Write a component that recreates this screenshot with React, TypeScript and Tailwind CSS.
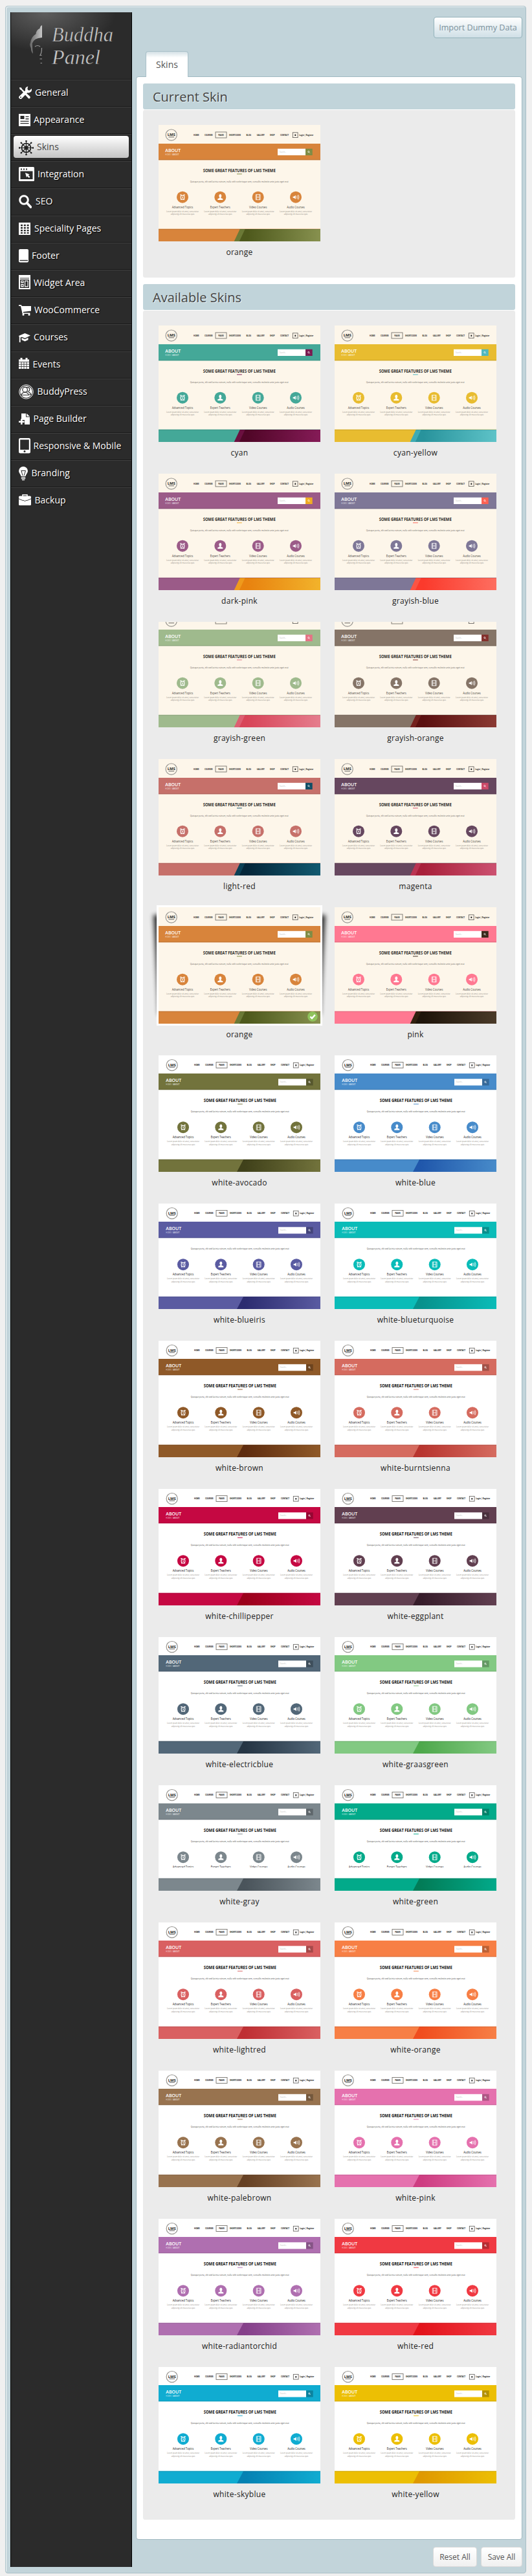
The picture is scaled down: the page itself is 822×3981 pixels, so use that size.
import { createContext, useContext } from 'react';
import type { ReactNode } from 'react';

type Skin = {
  name: string;
  main: string;
  accent: string;
  edge?: string;
  dark: string;
  light: string;
  white?: boolean;
  cut?: number;
  selected?: boolean;
};

const THUMB_H = 180;
const CUT_H = 17;

const w = (name: string, main: string, dark: string, cut?: number): Skin => ({
  name: 'white-' + name,
  main,
  accent: main,
  dark,
  light: main,
  white: true,
  cut,
});

const orange: Skin = { name: 'orange', main: '#d8843b', accent: '#7f8c45', edge: '#6b7936', dark: '#4e591c', light: '#87914f' };

const skins: Skin[] = [
  { name: 'cyan', main: '#44a898', accent: '#7a1a50', edge: '#6b1040', dark: '#500627', light: '#851b57' },
  { name: 'cyan-yellow', main: '#e8bc30', accent: '#4fb7bf', edge: '#3eabb3', dark: '#28939c', light: '#5ec3c8' },
  { name: 'dark-pink', main: '#9b5b88', accent: '#f0ac24', edge: '#ef9a1c', dark: '#e8820f', light: '#f2b32b' },
  { name: 'grayish-blue', main: '#7e7797', accent: '#fc6253', edge: '#fa5444', dark: '#fb3a2c', light: '#fd6e60' },
  { name: 'grayish-green', main: '#9fba8d', accent: '#e57385', edge: '#de5f72', dark: '#d84458', light: '#e57d8d', cut: 0 },
  { name: 'grayish-orange', main: '#857467', accent: '#84302c', edge: '#74211e', dark: '#5a1010', light: '#8b3a33', cut: 0 },
  { name: 'light-red', main: '#c6706a', accent: '#0f4e66', edge: '#0b4056', dark: '#04263a', light: '#125a70' },
  { name: 'magenta', main: '#66475f', accent: '#cb4a68', edge: '#bb3452', dark: '#a8203a', light: '#cc5170' },
  { ...orange, selected: true },
  { name: 'pink', main: '#ff7891', accent: '#3b2a1c', edge: '#30200f', dark: '#1e140a', light: '#4a3a28' },
  w('avocado', '#72733c', '#40411a'),
  w('blue', '#478bca', '#2057ab'),
  w('blueiris', '#5a5ba1', '#2c2c70', 61),
  w('blueturquoise', '#0abcb8', '#07918c', 61),
  w('brown', '#8f5928', '#5e2c0f'),
  w('burntsienna', '#d56b5f', '#b8352f'),
  w('chillipepper', '#c50842', '#9b001a'),
  w('eggplant', '#613f50', '#361c2a'),
  w('electricblue', '#526778', '#253544'),
  w('graasgreen', '#82c982', '#4ea84b'),
  w('gray', '#7c878d', '#4a545b', 127),
  w('green', '#02aa8a', '#027c57', 127),
  w('lightred', '#d96061', '#bf2f33'),
  w('orange', '#f77f45', '#f04d1e'),
  w('palebrown', '#98734f', '#664124'),
  w('pink', '#e571ae', '#ce3c81'),
  w('radiantorchid', '#af6fb0', '#85408a'),
  w('red', '#f03942', '#e3131b'),
  w('skyblue', '#10acd1', '#0582b3'),
  w('yellow', '#ecbf04', '#df9900'),
];

const nav: [string, number, number][] = [
  ['HOME', 58.3, 8.4],
  ['COURSES', 77.3, 12.6],
  ['PAGES', 96.5, 8.6],
  ['SHORTCODES', 118, 18],
  ['BLOG', 139.3, 7.6],
  ['GALLERY', 157.7, 12],
  ['SHOP', 175.7, 7.6],
  ['CONTACT', 194.5, 13],
];

const features: [string, number, number][] = [
  ['Advanced Topics', 37, 32.6],
  ['Expert Teachers', 95.3, 31],
  ['Video Courses', 153.7, 27.4],
  ['Audio Courses', 212, 27.6],
];

// Vertical slice of the artwork that is visible; text outside it is skipped.
const Slice = createContext<[number, number]>([0, THUMB_H]);

function T({ x, y, len, size, fill, weight = 400, anchor = 'start', children }: {
  x: number; y: number; len: number; size: number; fill: string; weight?: number; anchor?: 'start' | 'middle'; children: ReactNode;
}) {
  const [from, to] = useContext(Slice);
  if (y - 1.5 < from || y - size * 0.7 > to) return null;
  return (
    <text
      x={anchor === 'middle' ? x - len / 2 : x}
      y={y}
      textLength={len}
      lengthAdjust="spacingAndGlyphs"
      fontSize={size}
      fontWeight={weight}
      fill={fill}
    >
      {children}
    </text>
  );
}

const glyphs: ReactNode[] = [
  <g fill="none" stroke="#fff" strokeWidth="1.1" key="clock">
    <rect x="-2.8" y="-2.6" width="5.6" height="6" rx="2" />
    <path d="M-3.8-3.6h2.4M1.4-3.6h2.4M-2.8 4.2l1-1M2.8 4.2l-1-1M0-1v2h1" />
  </g>,
  <g fill="#fff" key="user">
    <ellipse cx="0" cy="-2" rx="2" ry="2.6" />
    <path d="M-1 0h2v1.400l3 1.200v1.600h-8v-1.600l3-1.200z" />
  </g>,
  <g fill="none" stroke="#fff" strokeWidth="0.8" key="film">
    <path d="M-3.400-4v8M3.400-4v8M-2-4v8M2-4v8M-3.400-4h6.800M-2 0h4M-3.400 4h6.800" />
  </g>,
  <g key="audio">
    <path d="M-4.400-1h1.600l2.600-2v6l-2.600-2h-1.600z" fill="#fff" />
    <path d="M1.200-2q1.200 2 0 4M2.600-3q1.800 3 0 6M4-3.800q2.200 3.800 0 7.600" fill="none" stroke="#fff" strokeWidth="0.7" />
  </g>,
];

function ThumbArt({ skin, id }: { skin: Skin; id: string }) {
  const wht = !!skin.white;
  const top = wht ? 28 : 29;
  const d = wht ? 1 : 0;
  const ink = wht ? '#111' : '#2b2926';
  return (
    <g fontFamily='"Open Sans", sans-serif'>
      <defs>
        <linearGradient id={id} x1="0.1" x2="1">
          <stop offset="0" stopColor={skin.dark} />
          <stop offset="1" stopColor={skin.light} />
        </linearGradient>
      </defs>
      <rect width="250" height="180" fill={wht ? '#fff' : '#fdf6ea'} />
      <g transform={`translate(${d} ${-d * 0.5})`}>
        <circle cx="19.7" cy="15.6" r="8.6" fill="none" stroke="#999793" strokeWidth="1.2" />
        <T x={19.7} y={17.4} len={12} size={5.6} fill="#222" weight={700} anchor="middle">LMS</T>
        <path d="M15.5 18.800h8.600" stroke="#555" strokeWidth="0.9" />
        {nav.map(([t, x, len]) => (
          <T key={t} x={x} y={16.8} len={len} size={3} fill={ink} weight={700} anchor="middle">{t}</T>
        ))}
        <rect x="88" y="11" width="17" height="9" fill="none" stroke="#77736e" strokeWidth="0.9" />
        <rect x="207.3" y="11.8" width="7.8" height="7.8" fill="none" stroke="#5a5754" strokeWidth="0.8" />
        <rect x="210.4" y="14.6" width="1.8" height="2.4" fill="#222" />
        <T x={217.3} y={16.8} len={22} size={3} fill={ink} weight={700}>Login | Register</T>
      </g>
      <rect y={top} width="250" height={wht ? 25 : 25.2} fill={skin.main} />
      <rect y={top + 24.3} width="250" height="0.9" fill="#000" opacity="0.14" />
      <rect y={top + 25.2} width="250" height="0.8" fill={skin.main} opacity="0.35" />
      <g transform={`translate(${d} ${-d * 0.5})`}>
        <T x={10.3} y={41.7} len={24} size={6.6} fill="#fff" weight={600}>ABOUT</T>
        <T x={10.3} y={46.6} len={21} size={2.6} fill="#ffffffb0">HOME / <tspan fontWeight="700">ABOUT</tspan></T>
        <rect x="184" y="36.8" width="43" height="10.2" fill="#fff" />
        <T x={187} y={42.7} len={10} size={2.8} fill="#bbb">Search...</T>
        <rect x="227" y="36.8" width="10.7" height="10.2" fill={skin.accent} />
        {wht && <rect x="227" y="36.8" width="10.7" height="10.2" fill="#000" opacity="0.24" />}
        <circle cx="231.8" cy="41.5" r="1.1" fill="none" stroke="#fff" strokeWidth="0.7" />
        <path d="M232.6 42.300l1.200 1.200" stroke="#fff" strokeWidth="0.7" />
        <T x={68.7} y={72.6} len={112} size={6.4} fill={wht ? '#111' : '#2b2926'} weight={700}>SOME GREAT FEATURES OF LMS THEME</T>
        <rect x="121" y="75" width="7.8" height="1.6" fill={skin.accent} opacity="0.6" />
        <T x={48.7} y={88.6} len={152} size={3.5} fill={wht ? '#444' : '#66625c'}>
          Quisque porta, elit sed lacinia rutrum, nulla velit scelerisque sem, convallis molestie ante justo eget erat
        </T>
        {features.map(([t, x, len], i) => (
          <g key={t}>
            <circle cx={x} cy="111.7" r="9" fill={skin.main} />
            <g transform={`translate(${x} 111.7)`}>{glyphs[i]}</g>
            <T x={x} y={128.5} len={len} size={4.4} fill={wht ? '#222' : '#4a4743'} anchor="middle">{t}</T>
            <T x={x} y={134.6} len={50} size={2.9} fill="#8f8b84" anchor="middle">Lorem ipsum dolor sit amet, consectetur</T>
            <T x={x} y={139.4} len={36.5} size={2.9} fill="#8f8b84" anchor="middle">adipiscing elit maecenas quis</T>
          </g>
        ))}
      </g>
      <rect y="160" width="250" height="1" fill={skin.main} opacity="0.35" />
      <rect y="161" width="250" height="19" fill={skin.main} />
      {wht ? (
        <path d="M131 161h119v19h-129z" fill={`url(#${id})`} />
      ) : (
        <>
          <path d="M125.7 161h124.3v19h-133.3z" fill={skin.edge} />
          <path d="M133.7 161h116.3v19h-125.3z" fill={`url(#${id})`} />
        </>
      )}
      <rect y="161" width="250" height="0.9" fill="#000" opacity="0.12" />
    </g>
  );
}

function Thumb({ skin, id }: { skin: Skin; id: string }) {
  if (skin.cut === undefined) {
    return (
      <svg width="250" height={THUMB_H} viewBox={`0 0 250 ${THUMB_H}`} className="block">
        <ThumbArt skin={skin} id={id} />
      </svg>
    );
  }
  const restTop = skin.cut + CUT_H;
  const rest = THUMB_H - restTop;
  return (
    <div className="flex flex-col">
      {skin.cut > 0 && (
        <Slice.Provider value={[0, skin.cut]}>
          <svg width="250" height={skin.cut} viewBox={`0 0 250 ${skin.cut}`} className="block">
            <ThumbArt skin={skin} id={id + 'a'} />
          </svg>
        </Slice.Provider>
      )}
      <Slice.Provider value={[restTop, THUMB_H]}>
        <svg width="250" height={rest} viewBox={`0 ${restTop} 250 ${rest}`} className="block">
          <ThumbArt skin={skin} id={id + 'b'} />
        </svg>
      </Slice.Provider>
    </div>
  );
}

function SkinCard({ skin, id }: { skin: Skin; id: string }) {
  return (
    <li className="w-[250px]">
      <div className="relative">
        {skin.selected && (
          <>
            <svg className="absolute -top-5 -left-5" width="290" height="220" viewBox="-20 -20 290 220">
              <defs>
                <filter id="lift" x="-20%" y="-20%" width="140%" height="140%">
                  <feGaussianBlur stdDeviation="3.6" />
                </filter>
              </defs>
              <path d="M-8 12H258Q254 80 250 166H0Q-4 80-8 12z" fill="#000" opacity="0.8" filter="url(#lift)" />
            </svg>
            <div className="absolute -inset-[3px] bg-white" />
          </>
        )}
        <div className="relative">
          <Thumb skin={skin} id={id} />
        </div>
        {skin.selected && (
          <svg className="absolute right-1 bottom-[3px]" width="16" height="16" viewBox="0 0 16 16">
            <circle cx="8" cy="8" r="7.8" fill="#8fc25c" />
            <path d="M4.400 8.200l2.600 2.600 4.800-5.400" fill="none" stroke="#fff" strokeWidth="2.4" />
          </svg>
        )}
      </div>
      <p className="pt-2 text-center text-[12px] leading-[18px] tracking-[0.3px] text-[#222]">{skin.name}</p>
    </li>
  );
}

type Item = { label: string; w: number; off: number; gap: number; icon: ReactNode };

const items: Item[] = [
  {
    label: 'General', w: 20, off: 4, gap: 5,
    icon: (
      <>
        <path d="M1 2l3 .6 1 2 6.2 6 5.8 5.2a2 2 0 0 1 .4 2.8 2 2 0 0 1-3 0L9 12.4 3.8 6.2 1.6 5z" />
        <path d="M14.4.4a5 5 0 0 0-4.2 6.4L1 15.4a2.6 2.6 0 0 0 3.6 3.8l8.8-9A5 5 0 0 0 19.8 4l-3 2.8-2.8-.6-.6-2.6z" />
        <circle cx="3" cy="17.2" r="1" fill="#2b2b2b" />
      </>
    ),
  },
  {
    label: 'Appearance', w: 18, off: 5, gap: 5,
    icon: (
      <>
        <path d="M0 0h18v19H0z" />
        <path d="M2.5 3h6v5h-6zM10.500 3.700h5v1.400h-5zM10.500 7h5v1.400h-5zM2.500 10.700h13v1.300h-13zM2.500 14h13v1.300h-13z" fill="#2b2b2b" />
      </>
    ),
  },
  {
    label: 'Skins', w: 23, off: 4, gap: 5,
    icon: (
      <g fill="none" stroke="#1d1d1d">
        <circle cx="11.500" cy="11.500" r="7" strokeWidth="1.700" />
        <circle cx="11.500" cy="11.500" r="2.600" strokeWidth="1.200" />
        <path d="M11.500 0v23M0 11.500h23M3.600 3.600l15.800 15.800M19.400 3.600L3.600 19.400" strokeWidth="1.100" />
        <path d="M11.500 0v2M11.500 21v2M0 11.500h2M21 11.500h2M3 3l1.500 1.500M18.500 18.500L20 20M20 3l-1.500 1.500M4.500 18.500L3 20" strokeWidth="2.400" />
      </g>
    ),
  },
  {
    label: 'Integration', w: 24, off: 3, gap: 5,
    icon: (
      <>
        <rect width="24" height="22" rx="1.500" />
        <path d="M2.500 6.500h19v12.500h-19zM3 2.500h2v2H3zM7 2.500h2v2H7zM11 2.500h2v2h-2z" fill="#2b2b2b" />
        <path d="M10 9l6.800 2.400-2 1.200 2.600 2.800-1.600 1.600-2.600-2.800-1.200 2z" />
      </>
    ),
  },
  {
    label: 'SEO', w: 20, off: 4, gap: 6,
    icon: (
      <>
        <circle cx="8" cy="8" r="6.300" fill="none" stroke="#fff" strokeWidth="3" />
        <path d="M12.500 12.500l6 6.500" stroke="#fff" strokeWidth="3.600" strokeLinecap="round" />
      </>
    ),
  },
  {
    label: 'Speciality Pages', w: 18, off: 5, gap: 6,
    icon: (
      <>
        <path d="M0 0h18v19H0z" />
        <path d="M3 3h3v2.500H3zM7.800 3h3v2.500h-3zM12.600 3h3v2.500h-3zM3 7h3v2.500H3zM7.800 7h3v2.500h-3zM12.600 7h3v2.500h-3zM3 11h3v2.500H3zM7.800 11h3v2.500h-3zM12.600 11h3v2.500h-3zM3 15h3v2H3zM7.800 15h3v2h-3zM12.600 15h3v2h-3z" fill="#2b2b2b" />
      </>
    ),
  },
  {
    label: 'Footer', w: 15, off: 4, gap: 5,
    icon: (
      <>
        <rect width="15" height="20.500" rx="2" />
        <path d="M1.500 16.800h12.500v1.400H1.500z" fill="#2b2b2b" />
      </>
    ),
  },
  {
    label: 'Widget Area', w: 18, off: 2, gap: 5,
    icon: (
      <>
        <path d="M0 0h18v22H0z" />
        <path d="M2 4.500h14v1H2zM2 7h14v13H2z" fill="#2b2b2b" />
        <path d="M3.300 8.500h4.400v4H3.300zM3.300 14h4.400v4.500H3.300zM9 8.500h5.700v10H9z" />
        <path d="M4.400 9.800h2.200v1.200H4.400zM4.400 15.500h2.200v1.500H4.400zM10.200 9.700h3.300v7.600h-3.300z" fill="#2b2b2b" />
      </>
    ),
  },
  {
    label: 'WooCommerce', w: 19, off: 6, gap: 5,
    icon: (
      <>
        <path d="M0 .3h3.800l1 1.700H19v7.500L6.700 11l.5 1.500h10.300V14H5.700L3 2H0z" />
        <circle cx="7" cy="15.300" r="1.500" />
        <circle cx="16" cy="15.300" r="1.500" />
      </>
    ),
  },
  {
    label: 'Courses', w: 18, off: 8, gap: 5,
    icon: (
      <>
        <path d="M0 4l9.500-4L18 3.600 9.500 7.800 5 5.800 2.600 6.500V14H.8V6z" />
        <path d="M4.500 7l5 2.200 5-2.400v3.400l-5 2.200-5-2.200z" />
      </>
    ),
  },
  {
    label: 'Events', w: 16, off: 4, gap: 5.5,
    icon: (
      <>
        <path d="M0 2.500h16V17H0z" />
        <path d="M2.500 0h3v4h-3zM10.500 0h3v4h-3z" />
        <path d="M0 6.400h16M0 10h16M0 13.500h16M4 6.400V17M8 6.400V17M12 6.400V17" stroke="#2b2b2b" strokeWidth="0.8" />
      </>
    ),
  },
  {
    label: 'BuddyPress', w: 23, off: 3, gap: 5.5,
    icon: (
      <>
        <circle cx="11.500" cy="11.500" r="10.800" fill="none" stroke="#fff" strokeWidth="1" />
        <circle cx="11.500" cy="11.500" r="9.300" />
        <circle cx="13.600" cy="7.800" r="3.200" stroke="#2b2b2b" strokeWidth="1.200" />
        <circle cx="9.600" cy="8.200" r="3.800" stroke="#2b2b2b" strokeWidth="1.200" />
        <path d="M3.800 16.500q1-4 5.800-4t5.800 4z" stroke="#2b2b2b" strokeWidth="1.200" />
        <path d="M15 12q3 .6 3.800 4h-3" stroke="#2b2b2b" strokeWidth="1.200" />
      </>
    ),
  },
  {
    label: 'Page Builder', w: 17, off: 6, gap: 5.5,
    icon: (
      <>
        <path d="M4 0h7v5.500h6V17H9v-7H4z" />
        <path d="M12 0l5 4.600h-5z" />
        <path d="M3 8.500h2.600v3H8.500v2.600H5.600v3H3v-3H0v-2.600h3z" />
      </>
    ),
  },
  {
    label: 'Responsive & Mobile', w: 18, off: 2, gap: 4.5,
    icon: (
      <>
        <rect width="18" height="23.500" rx="2.500" />
        <path d="M2.200 2.500h13.600v15.500H2.200z" fill="#2b2b2b" />
        <circle cx="9" cy="20.500" r="1.500" fill="#2b2b2b" />
      </>
    ),
  },
  {
    label: 'Branding', w: 14, off: 4, gap: 5.5,
    icon: (
      <>
        <path d="M7 0a7 7 0 0 1 7 7c0 3-3 5-3.500 8h-7C3 12 0 10 0 7a7 7 0 0 1 7-7z" />
        <path d="M3.500 6.500h7L8 14M4 6.500L6 14" fill="none" stroke="#2b2b2b" strokeWidth="1" />
        <path d="M3.800 16h6.400v1.300H3.800zM3.800 18h6.400v1.300H3.800zM5 20h4v1.300H5z" />
      </>
    ),
  },
  {
    label: 'Backup', w: 19, off: 5, gap: 5.5,
    icon: (
      <>
        <path d="M6 3V.8h7V3" fill="none" stroke="#fff" strokeWidth="1.500" />
        <rect y="2.500" width="19" height="14.500" rx="1.500" />
        <path d="M0 6.800l7 3M19 6.800l-7 3M7 9q2.500 3 5 0" fill="none" stroke="#2b2b2b" strokeWidth="0.9" />
      </>
    ),
  },
];

function Sidebar() {
  return (
    <aside className="w-[188px] shrink-0 border-x border-black bg-[#2b2b2b]">
      <div className="h-[104px] border-b border-[#191919] bg-[radial-gradient(ellipse_110px_60px_at_28%_0%,#5e5e5e,#2b2b2b)]">
        <svg width="186" height="103" viewBox="17 19 186 103" className="block">
          <defs>
            <linearGradient id="silver" x1="0" x2="1">
              <stop offset="0" stopColor="#666" />
              <stop offset="1" stopColor="#c8c8c8" />
            </linearGradient>
          </defs>
          <path d="M65 39q-3 1-3.500 5-5.500 2-6 8.500Q48 57 47 66q-2 3 .8 8 .2 6 3 9-1-10-1-16 2-8 15.200-9z" fill="url(#silver)" />
          <path d="M54 72q4-3 8 0M64.500 74q0 8-2.600 11.500h2.600M61.500 91h3.500M62.500 97.500h2.500" fill="none" stroke="#999" strokeWidth="1.200" />
          <g fontFamily='"Liberation Serif", serif' fontStyle="italic" fontSize="32" fill="#cacaca" stroke="#2b2b2b" strokeWidth="0.5">
            <text x="80" y="64" textLength="95" lengthAdjust="spacingAndGlyphs">Buddha</text>
            <text x="80" y="99" textLength="75" lengthAdjust="spacingAndGlyphs">Panel</text>
          </g>
        </svg>
      </div>
      <ul>
        {items.map((it, i) => {
          const active = it.label === 'Skins';
          const last = i === items.length - 1;
          return (
            <li
              key={it.label}
              className={
                'flex h-[42px] border-t border-t-[#404040] px-1 ' +
                (last ? '' : 'border-b border-b-[#191919]')
              }
            >
              <div
                className={
                  'mt-[2px] flex h-[34px] w-full pl-2 ' +
                  (active ? 'rounded-[4px] bg-gradient-to-b from-white to-[#c4c4c4]' : '')
                }
              >
                <svg width={it.w} height="30" viewBox={`0 ${-it.off} ${it.w} 30`} fill="#fff" className="mt-[3px] shrink-0">
                  {it.icon}
                </svg>
                <span
                  className={
                    'text-[14px] leading-[34px] whitespace-nowrap ' +
                    (active ? 'text-[#444]' : 'text-white [text-shadow:1px_1px_1px_#000]')
                  }
                  style={{ marginLeft: it.gap }}
                >
                  {it.label}
                </span>
              </div>
            </li>
          );
        })}
      </ul>
    </aside>
  );
}

function PanelTitle({ children }: { children: ReactNode }) {
  return (
    <h2 className="h-10 rounded-[3px] bg-[#c1d4da] pl-[15px] text-[20px] leading-[41px] text-[#444] [text-shadow:1px_1px_0_#e8f0f2]">
      {children}
    </h2>
  );
}

export default function App() {
  return (
    <div className="h-[3981px] w-[822px] bg-[#f0f0f0] pt-[9px] pl-2 font-['Open_Sans',sans-serif]">
      <div className="flex h-[3968px] w-[805px] rounded-[4px] border border-[#a9c0c8] bg-[#c2d4da] pt-[9px] pb-[9px] pl-[7px] shadow-[inset_1px_1px_0_#f2f7f8]">
        <Sidebar />
        <div className="ml-[6px] flex w-[597px] flex-col">
          <div className="flex h-[60px] justify-end pt-[7px]">
            <button className="h-[33px] w-[137px] rounded-[4px] border border-[#94b3bb] bg-gradient-to-b from-white to-[#cfdfe6] text-[12.6px] leading-[30px] whitespace-nowrap text-[#7b919c]">
              Import Dummy Data
            </button>
          </div>
          <div className="flex h-[39px] pl-[15px]">
            <div className="relative z-10 h-10 w-[66px] rounded-t-[4px] border border-b-0 border-[#a9c0c8] bg-[linear-gradient(#d3e0e5,#fff_9px)] pt-[1px] text-center text-[14px] leading-[38px] text-[#555]">
              Skins
            </div>
          </div>
          <main className="h-[3807px] rounded-[4px] border border-[#a0b9c1] bg-white px-[10px] pt-[10px]">
            <PanelTitle>Current Skin</PanelTitle>
            <ul className="mt-px h-[259px] rounded-[3px] bg-[#ebebeb] pt-[23px] pl-6">
              <SkinCard skin={orange} id="current" />
            </ul>
            <div className="h-[10px]" />
            <PanelTitle>Available Skins</PanelTitle>
            <ul className="mt-px grid h-[3414px] grid-cols-[250px_250px] content-start gap-x-[22px] gap-y-[23px] rounded-[3px] bg-[#ebebeb] pt-[23px] pl-6">
              {skins.map((s, i) => (
                <SkinCard key={s.name + i} skin={s} id={`band${i}`} />
              ))}
            </ul>
          </main>
          <div className="mt-[11px] flex justify-end gap-[6px]">
            <button className="h-[31px] w-[68px] rounded-[4px] border border-[#d9d9d9] bg-gradient-to-b from-white to-[#f0f0f0] text-[12px] whitespace-nowrap text-[#555]">
              Reset All
            </button>
            <button className="h-[31px] w-[64px] rounded-[4px] border border-[#d9d9d9] bg-gradient-to-b from-white to-[#f0f0f0] text-[12px] whitespace-nowrap text-[#555]">
              Save All
            </button>
          </div>
        </div>
      </div>
    </div>
  );
}
